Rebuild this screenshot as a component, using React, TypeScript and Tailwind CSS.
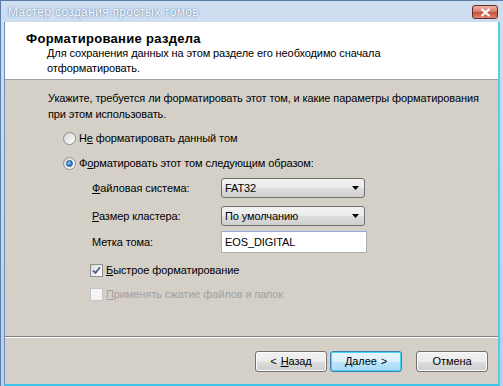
import React from "react";

const font = { fontFamily: '"Liberation Sans", Arial, sans-serif' };

function Radio({ checked }: { checked?: boolean }) {
  return (
    <div className="w-[13px] h-[13px] rounded-full border border-[#8e8f8f] bg-gradient-to-br from-[#d6d6d6] to-[#ffffff] flex items-center justify-center shrink-0">
      {checked && (
        <div className="w-[7px] h-[7px] rounded-full bg-[radial-gradient(circle_at_40%_40%,#8fd3ff_0%,#2f7fd6_55%,#1c4f95_100%)] border border-[#1e5799]" />
      )}
    </div>
  );
}

function Check({ checked, disabled }: { checked?: boolean; disabled?: boolean }) {
  return (
    <div
      className={
        "w-[13px] h-[13px] border shrink-0 flex items-center justify-center " +
        (disabled
          ? "border-[#c4c4c4] bg-[#f4f4f4]"
          : "border-[#8e8f8f] bg-gradient-to-br from-[#dcdcdc] to-[#ffffff]")
      }
    >
      {checked && (
        <svg width="9" height="9" viewBox="0 0 9 9">
          <path d="M1 4.5 L3.5 7 L8 1.2" fill="none" stroke="#4a5f97" strokeWidth="1.8" />
        </svg>
      )}
    </div>
  );
}

function Select({ value }: { value: string }) {
  return (
    <div className="w-[144px] h-[20px] rounded-[3px] border border-[#707070] bg-[linear-gradient(#f2f2f2_0%,#ebebeb_50%,#dddddd_51%,#cfcfcf_100%)] flex items-center pl-[3px] pr-[5px] justify-between">
      <span className="text-[11px] text-black">{value}</span>
      <svg width="7" height="4" viewBox="0 0 7 4">
        <path d="M0 0 H7 L3.5 4 Z" fill="#000" />
      </svg>
    </div>
  );
}

function Button({ children, focused }: { children: React.ReactNode; focused?: boolean }) {
  return (
    <div
      className={
        "w-[72px] h-[21px] rounded-[3px] border flex items-center justify-center text-[11px] text-black tracking-[-0.1px] " +
        (focused
          ? "border-[#3c7fb1] bg-[linear-gradient(#eaf6fd_0%,#d9f0fc_50%,#bee6fd_51%,#a7d9f5_100%)] shadow-[inset_0_0_0_1px_#48d4fb]"
          : "border-[#707070] bg-[linear-gradient(#f2f2f2_0%,#ebebeb_50%,#dddddd_51%,#cfcfcf_100%)] shadow-[inset_0_0_0_1px_#fcfcfc]")
      }
    >
      {children}
    </div>
  );
}

export default function App() {
  return (
    <div
      className="w-[503px] h-[386px] flex flex-col bg-[linear-gradient(#cfdff2,#b9cfe9)] border-l border-t border-[#5b7da8] overflow-hidden"
      style={font}
    >
      {/* Title bar */}
      <div className="h-[21px] flex items-center justify-between pl-[7px] pr-[5px]">
        <span className="text-[12px] tracking-[0.3px] text-white [text-shadow:0_0_1px_#4d6f9c,0_0_3px_#7f9fc8]">
          Мастер создания простых томов
        </span>
        <div className="w-[26px] h-[14px] mt-[1px] rounded-[3px] border border-[#6b2a22] bg-[linear-gradient(#eeb4a6_0%,#d98270_45%,#c7503a_55%,#dc8a74_100%)] flex items-center justify-center">
          <svg width="11" height="9" viewBox="0 0 11 9">
            <path d="M1.5 1 L9.5 8 M9.5 1 L1.5 8" stroke="#fff" strokeWidth="2.2" />
          </svg>
        </div>
      </div>
      {/* Client */}
      <div className="flex-1 ml-[3px] mr-[3px] flex flex-col border-l border-[#6d8fba] border-r-2 border-r-[#5cc8e8] border-b-2 border-b-[#3fc3e6]">
        {/* Header */}
        <div className="h-[58px] bg-white border-b border-[#a0a0a0] pl-[21px] pt-[10px]">
          <div className="text-[13px] tracking-[0.3px] font-bold text-black leading-[14px]">
            Форматирование раздела
          </div>
          <div className="pl-[21px] text-[11px] leading-[15px] tracking-[-0.1px] text-black">
            Для сохранения данных на этом разделе его необходимо сначала
            <br />
            отформатировать.
          </div>
        </div>
        {/* Body */}
        <div className="flex-1 bg-[#d4d0c8] flex flex-col">
          <div className="flex-1 pl-[43px] pt-[10px] text-[11px] tracking-[-0.1px] text-black">
            <div className="leading-[16px]">
              Укажите, требуется ли форматировать этот том, и какие параметры форматирования
              <br />
              при этом использовать.
            </div>
            <div className="mt-[8px] pl-[15px] flex items-center gap-[3px] h-[16px]">
              <Radio />
              <span>
                Н<u>е</u> форматировать данный том
              </span>
            </div>
            <div className="mt-[9px] pl-[15px] flex items-center gap-[3px] h-[16px]">
              <Radio checked />
              <span>
                Ф<u>о</u>рматировать этот том следующим образом:
              </span>
            </div>
            <div className="mt-[7px] pl-[44px] flex flex-col">
              <div className="flex items-center h-[20px]">
                <span className="w-[129px]">
                  <u>Ф</u>айловая система:
                </span>
                <Select value="FAT32" />
              </div>
              <div className="flex items-center h-[20px] mt-[8px]">
                <span className="w-[129px]">
                  <u>Р</u>азмер кластера:
                </span>
                <Select value="По умолчанию" />
              </div>
              <div className="flex items-center h-[22px] mt-[5px]">
                <span className="w-[129px]">Метка тома:</span>
                <div className="w-[146px] h-[22px] border border-[#abadb3] border-t-[#8fb0d6] bg-white flex items-center pl-[3px] text-[11px]">
                  EOS_DIGITAL
                </div>
              </div>
              <div className="flex items-center gap-[3px] mt-[9px] -ml-[2px] h-[16px]">
                <Check checked />
                <span>
                  <u>Б</u>ыстрое форматирование
                </span>
              </div>
              <div className="flex items-center gap-[3px] mt-[8px] -ml-[2px] h-[16px] text-[#a0a0a0]">
                <Check disabled />
                <span>
                  <u>П</u>рименять сжатие файлов и папок
                </span>
              </div>
            </div>
          </div>
          {/* separator */}
          <div className="h-[1px] bg-[#808080]" />
          <div className="h-[1px] bg-white" />
          <div className="h-[46px] flex items-start justify-end pt-[13px] pr-[10px]">
            <Button>
              <span className="mr-[4px]">&lt;</span>
              <u>Н</u>азад
            </Button>
            <div className="w-[3px]" />
            <Button focused>
              <u>Д</u>алее<span className="ml-[4px]">&gt;</span>
            </Button>
            <div className="w-[14px]" />
            <Button>Отмена</Button>
          </div>
        </div>
      </div>
    </div>
  );
}
